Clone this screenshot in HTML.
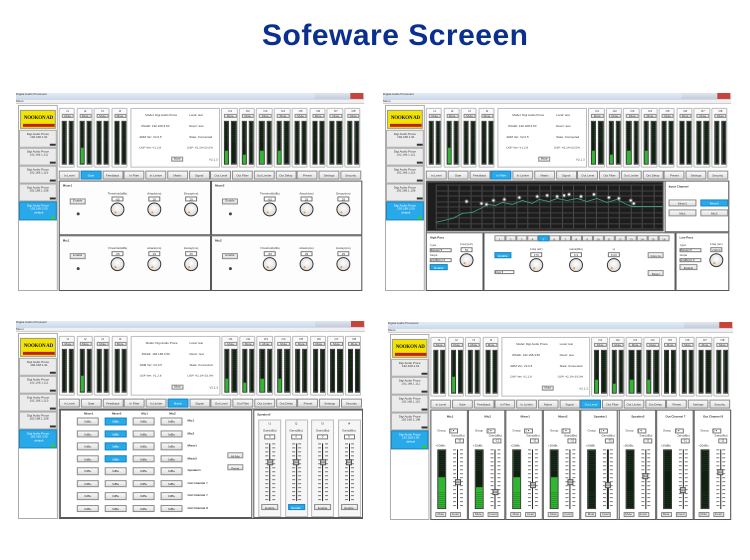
<!DOCTYPE html>
<html><head><meta charset="utf-8"><style>
html,body{margin:0;padding:0;background:#fff;width:750px;height:560px;overflow:hidden;font-family:"Liberation Sans",sans-serif}
h1{position:absolute;left:262px;top:19px;margin:0;white-space:nowrap;font:bold 30px "Liberation Sans",sans-serif;letter-spacing:0.5px;color:#0b2f8e}
.w{position:absolute;width:350px;height:200px;transform-origin:0 0;background:#fff;overflow:hidden}
.w div{font-size:3px;line-height:3.4px;color:#333;white-space:nowrap;overflow:hidden}
</style></head><body>
<h1>Sofeware Screeen</h1>
<div class="w" id="w1" style="left:16px;top:93px;transform:scale(0.995,0.995)"></div>
<div class="w" id="w2" style="left:383px;top:93px;transform:scale(0.995,0.995)"></div>
<div class="w" id="w3" style="left:16px;top:321px;transform:scale(0.997,0.995)"></div>
<div class="w" id="w4" style="left:388px;top:322px;transform:scale(0.986,0.995)"></div>
<script>
function D(p,x,y,w,h,css,t){var d=document.createElement('div');d.style.cssText='position:absolute;left:'+x+'px;top:'+y+'px;width:'+w+'px;height:'+h+'px;box-sizing:border-box;'+(css||'');if(t)d.textContent=t;p.appendChild(d);return d;}
var BTN='background:linear-gradient(#fbfbfb,#dcdcdc);border:0.5px solid #888;text-align:center;';
var BLUE='background:#27a9ea;border:0.5px solid #1b86c0;color:#fff;text-align:center;';
var TABS=['In Level','Gate','Feedback','In Filter','In Limiter','Matrix','Signal','Out Level','Out Filter','Out Limiter','Out Delay','Preset','Settings','Security'];
function bar(p,x,y,w,h,g){var b=D(p,x,y,w,h,'background:repeating-linear-gradient(#102010 0 1.6px,#1f331f 1.6px 2px);border:0.5px solid #333');if(g)D(b,0,h*(1-g),w-1,h*g,'background:repeating-linear-gradient(#2fb82f 0 1.6px,#1c7a1c 1.6px 2px)');return b;}
function strip(p,x,w,lab,gl){var s=D(p,x,15,w,60,'border:0.5px solid #bbb;background:#fafafa;border-radius:1px');D(s,0,1,w,3,'text-align:center',lab);D(s,2,5,w-4,4,BTN,'Mute');var bw=(w-6)/2;bar(s,2,12,bw,44,gl);bar(s,3+bw+1,12,bw,44,0);}
function base(id,sel){var w=document.getElementById(id);
D(w,0,0,350,7,'background:linear-gradient(#e4ecf6,#c9d7ea)','  Digital Audio Processor');
D(w,300,0,50,6,'background:linear-gradient(#e0e6ee,#c4ccd8)');D(w,336,0,13,6,'background:#c8443a');
D(w,0,7,350,4,'background:#f0f0f0;border-bottom:0.5px solid #ccc','Menu');
D(w,2,12,40,187,'border:0.5px solid #aaa;background:#fff');
var lg=D(w,4,17,36,19,'background:#f2e400;border:0.5px solid #999');
D(lg,0,4,35,8,'font:bold 5px/8px \"Liberation Serif\",serif;color:#111;text-align:center;letter-spacing:-0.2px','NOOKON AD');
D(lg,2,13,32,3,'background:#c0201a');
var ips=['192.168.1.91','192.168.1.111','192.168.1.115','192.168.1.108'];
for(var i=0;i<4;i++){var it=D(w,3,37+i*18,38,18,'background:#ebebeb;border:0.5px solid #aaa;text-align:center;padding-top:2px','Digi Audio Proce');D(it,0,5,38,4,'text-align:center',ips[i]);D(it,30,13,6,2,'background:#333');}
var s=D(w,3,109,38,19,BLUE+'padding-top:2px','Digi Audio Proce');D(s,0,5,38,4,'color:#fff;text-align:center','192.168.3.50');D(s,0,9,38,4,'color:#fff;text-align:center','default');D(s,31,14,4,3,'background:#3c3');
var ig=[0,0.42,0,0];for(i=0;i<4;i++)strip(w,43+i*17.5,16,'I'+(i+1),ig[i]);
var inf=D(w,115,15,90,60,'border:0.5px solid #bbb;background:#fff');
D(inf,14,5,40,4,'','Model: Digi Audio Proce');D(inf,58,5,30,4,'','Local: test');
D(inf,10,16,40,4,'','IPAddr: 192.168.3.50');D(inf,58,16,30,4,'','Descr: test');
D(inf,8,27,40,4,'','ARM Ver: V2.0.5');D(inf,58,27,30,4,'','State: Connected');
D(inf,8,38,40,4,'','DSP Ver: V1.2.8');D(inf,56,38,34,4,'','DSP: 42.1%-53.0%');
D(inf,40,48,12,5,BTN,'Mute');D(inf,78,50,10,4,'','V2.1.3');
var og=[0.35,0.25,0.35,0.33,0,0,0,0];for(i=0;i<8;i++)strip(w,206+i*17.7,16.5,'O'+(i+1),og[i]);
for(i=0;i<14;i++)D(w,43+i*21.75,78,21.2,9,(i==sel?BLUE:BTN)+'line-height:9px',TABS[i]);
D(w,43,88,305,111,'border:0.8px solid #555;background:#fff');
return w;}
function knob(p,x,y,lab,val){D(p,x-10,y,20,3,'text-align:center',lab);D(p,x-6,y+4,12,4.5,'border:0.5px solid #777;background:#fff;text-align:center;line-height:4px',val);
var k=D(p,x-7,y+10,14,14,'border-radius:50%;border:1.6px solid #333;background:radial-gradient(circle at 50% 40%,#fff,#ddd 70%,#aaa)');D(k,3,8,2,2,'background:#f39a1a;border-radius:50%');}
function fader(p,x,y,h,ty){D(p,x,y,1.2,h,'background:#222');for(var t=0;t<h;t+=4){D(p,x-4,y+t,3,0.5,'background:#777');D(p,x+2.5,y+t,3,0.5,'background:#777');}D(p,x-2.5,y+ty,6,6,'background:linear-gradient(#eee,#888,#eee);border:0.5px solid #555');}
/* W1 gate */
(function(){var w=base('w1',1);var P=[[43,88,'Mixer1'],[196,88,'Mixer2'],[43,143,'Mic1'],[196,143,'Mic2']];
P.forEach(function(q){var p=D(w,q[0],q[1],q==P[0]||q==P[2]?153:152,q[1]==88?55:56,'border:0.8px solid #555;background:#fdfdfd');D(p,3,3,30,4,'font-weight:bold',q[2]);D(p,10,17,16,6,BTN,'Enable');D(p,17,31,3,3,'background:#444;border-radius:50%');knob(p,58,11,'Threshold(dBu)','-65');knob(p,95,11,'Attack(ms)','29');knob(p,132,11,'Decay(ms)','29');});})();
/* W2 filter */
(function(){var w=base('w2',3);var g=D(w,44,89,238,50,'background:#1d1d1d;border:1px solid #555');
for(var i=0;i<20;i++)D(g,8+i*11.5,2,0.5,44,'background:#4a4a4a');for(i=0;i<9;i++)D(g,8,2+i*5.5,228,0.4,'background:#444');
var sv='<svg width="236" height="48" style="position:absolute;left:0;top:0"><polyline fill="none" stroke="#3aa58a" stroke-width="0.8" points="8,40 25,36 35,31 45,30 55,25 60,22 68,23 75,20 85,22 95,18 105,21 112,17 122,19 130,16 140,18 150,16 160,19 170,16 180,20 190,17 200,22 205,24 210,24 236,24"/></svg>';g.insertAdjacentHTML('beforeend',sv);
[[37,17],[52,19],[57,20],[64,16],[75,15],[90,13],[108,12],[118,11],[128,12],[135,11],[140,10],[152,12],[165,10],[180,13],[190,14],[202,16],[205,19]].forEach(function(c){D(g,c[0],c[1],3.5,3.5,'background:#fff;border-radius:50%;border:0.5px solid #666');});
var r=D(w,283,88,65,52,'border:0.8px solid #555;background:#fff');D(r,3,4,30,4,'font-weight:bold','Input Channel');
D(r,3,18,28,7,BTN+'line-height:7px','Mixer1');D(r,35,18,28,7,BLUE+'line-height:7px','Mixer2');D(r,3,28,28,7,BTN+'line-height:7px','Mic1');D(r,35,28,28,7,BTN+'line-height:7px','Mic2');
var hp=D(w,43,140,58,59,'border:0.8px solid #555;background:#fff');D(hp,3,3,30,4,'font-weight:bold','High Pass');D(hp,3,11,10,3,'','Type');D(hp,3,15,22,4,'border:0.5px solid #777','Bessel ▾');D(hp,3,21,10,3,'','Slope');D(hp,3,25,22,4,'border:0.5px solid #777','24dB/oct ▾');D(hp,3,31,18,6,BLUE+'line-height:6px','Enable');knob(hp,40,10,'Freq (Hz)','50');
var m=D(w,101,140,193,59,'border:0.8px solid #555;background:#fff');for(i=0;i<16;i++)D(m,10+i*11,2,10.5,6,(i==4?BLUE:BTN)+'line-height:6px',''+(i+1));
D(m,10,19,17,6,BLUE+'line-height:6px','Enable');D(m,10,37,20,4,'border:0.5px solid #777','Peq ▾');knob(m,52,15,'Freq (Hz)','173');knob(m,92,15,'Gain(dBu)','6.3');knob(m,130,15,'Q','6.00');D(m,164,19,16,6,BTN+'line-height:6px','Copy to');D(m,164,37,16,6,BTN+'line-height:6px','Reset');
var lp=D(w,294,140,54,59,'border:0.8px solid #555;background:#fff');D(lp,3,3,30,4,'font-weight:bold','Low Pass');D(lp,3,11,10,3,'','Type');D(lp,3,15,22,4,'border:0.5px solid #777','Bessel ▾');D(lp,3,21,10,3,'','Slope');D(lp,3,25,22,4,'border:0.5px solid #777','24dB/oct ▾');D(lp,3,31,18,6,BTN+'line-height:6px','Enable');knob(lp,40,10,'Freq (Hz)','20000');})();
/* W3 matrix */
(function(){var w=base('w3',5);var L=D(w,44,89,193,109,'border:0.8px solid #555;background:#fff');
['Mixer1','Mixer2','Mic1','Mic2'].forEach(function(t,i){D(L,18+i*28,2,20,4,'text-align:center;font-weight:bold',t);});
var rl=['Mic1','Mic2','Mixer1','Mixer2','Speaker1','Out Channel 7','Out Channel 7','Out Channel 8'];
for(var r=0;r<8;r++){for(var c=0;c<4;c++)D(L,16+c*28,7+r*12.5,22,7.5,((c==1&&r<4)?BLUE:BTN)+'line-height:7px','0dBu');D(L,127,9+r*12.5,30,4,'font-weight:bold',rl[r]);}
D(L,167,42,16,6,BTN+'line-height:6px','All Mix');D(L,167,54,16,6,BTN+'line-height:6px','Reset');
var R=D(w,238,89,110,109,'border:0.8px solid #555;background:#fff');D(R,3,3,30,4,'font-weight:bold','Speaker2');
for(var i=0;i<4;i++){var x=4+i*26.5;D(R,x,9,23,98,'border:0.5px solid #bbb;background:#f6f6f6');D(R,x,12,23,3,'text-align:center','I'+(i+1));D(R,x,19,23,3,'text-align:center','Gain(dBu)');D(R,x+6,24,11,4.5,'border:0.5px solid #777;background:#fff;text-align:center','0');fader(R,x+11,33,58,16);D(R,x+3,94,17,6,(i==1?BLUE:BTN)+'line-height:6px','Enable');}})();
/* W4 out level */
(function(){var w=base('w4',7);var names=['Mic1','Mic2','Mixer1','Mixer2','Speaker1','Speaker2','Out Channel 7','Out Channel 8'];var gl=[0.55,0.38,0.55,0.55,0,0,0,0];var ft=[30,40,33,30,33,24,38,20];
for(var i=0;i<8;i++){var c=D(w,43+i*38.1,88,38.1,111,'border:0.8px solid #555;background:#fff');D(c,0,5,38,4,'text-align:center;font-weight:bold',names[i]);D(c,6,19,10,3,'','Group');D(c,18,18,9,4.5,'border:0.5px solid #777','1 ▾');D(c,20,24,14,3,'','Gain(dBu)');D(c,24,28,9,4.5,'border:0.5px solid #777;text-align:center','-11');D(c,4,34,10,3,'','+20dBu');bar(c,6,39,9,60,gl[i]);fader(c,26,39,60,ft[i]);D(c,4,102,11,5,BTN,'Mute');D(c,19,102,11,5,BTN,'Invert');}})();
</script>
</body></html>
